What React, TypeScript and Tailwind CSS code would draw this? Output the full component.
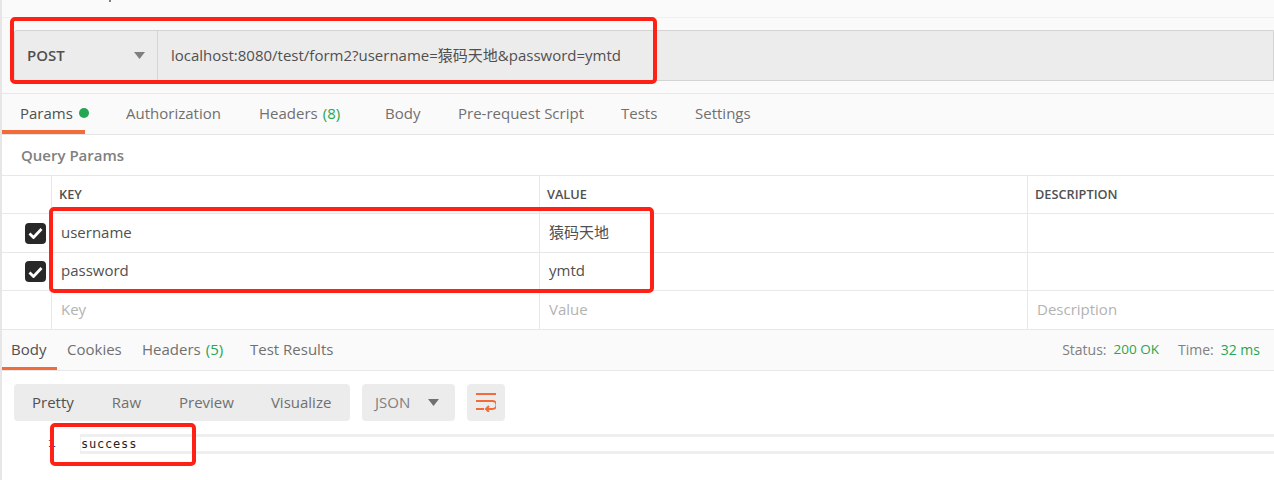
const font = "font-['Open_Sans','Noto_Sans_CJK_SC',sans-serif]";

const requestTabs = [
  { label: "Authorization", width: "w-[133px]" },
  { label: "Headers", count: "(8)", width: "w-[126px]" },
  { label: "Body", width: "w-[73px]" },
  { label: "Pre-request Script", width: "w-[163px]" },
  { label: "Tests", width: "w-[74px]" },
  { label: "Settings", width: "w-[80px]" },
];

function Caret({ className }: { className: string }) {
  return (
    <svg width="11" height="7" viewBox="0 0 11 7" className={className}>
      <path d="M0 0h11L5.5 7z" fill="currentColor" />
    </svg>
  );
}

function Check() {
  return (
    <div className="flex h-[21px] w-[21px] items-center justify-center rounded-[4px] bg-[#282828]">
      <svg width="15" height="12" viewBox="0 0 15 12" fill="none">
        <path d="M1.5 6.5l4 4L13.5 2" stroke="#fff" strokeWidth="2.8" />
      </svg>
    </div>
  );
}

function ParamRow({
  name,
  value,
  placeholder,
  checked,
  height,
}: {
  name: string;
  value: string;
  placeholder?: string;
  checked?: boolean;
  height: string;
}) {
  const tone = placeholder ? "text-[#b3b3b3]" : "text-[#505050]";
  return (
    <div className={`flex ${height} border-b border-[#e8e8e8] bg-white text-[15px] ${tone}`}>
      <div className="flex w-[49px] shrink-0 items-center justify-end pr-[5px]">
        {checked && <Check />}
      </div>
      <div className="flex w-[488px] shrink-0 items-center border-l border-[#e8e8e8] pb-[2px] pl-[9px]">{name}</div>
      <div className="flex w-[488px] shrink-0 items-center border-l border-[#e8e8e8] pb-[2px] pl-[9px]">{value}</div>
      <div className="flex flex-1 items-center border-l border-[#e8e8e8] pb-[2px] pl-[9px]">{placeholder}</div>
    </div>
  );
}

export default function App() {
  return (
    <div className={`relative h-[480px] w-[1274px] overflow-hidden border-l-2 border-[#e6e6e6] bg-[#fafafa] ${font}`}>
      {/* clipped tail of the tab title above the request bar */}
      <div className="h-[18px] border-b border-[#efefef]" />
      <div className="absolute left-[107px] top-0 h-[2px] w-[2px] bg-[#808080]" />

      {/* method + url */}
      <div className="h-[76px] border-b border-[#e8e8e8] pl-[12px] pt-[12px]">
        <div className="flex h-[51px] rounded-l-[3px] border border-[#d4d4d4] bg-[#ececec]">
          <div className="flex w-[143px] shrink-0 items-center justify-between border-r border-[#d4d4d4] pl-[12px] pr-[12px] text-[15px] font-semibold text-[#505050]">
            POST
            <Caret className="text-[#7f7f7f]" />
          </div>
          <div className="flex flex-1 items-center pl-[13px] text-[15px] text-[#505050]">
            localhost:8080/test/form2?username=猿码天地&amp;password=ymtd
          </div>
        </div>
      </div>

      {/* request tabs */}
      <div className="flex h-[41px] border-b border-[#e4e4e4] text-[15px] text-[#707070]">
        <div className="flex w-[83px] shrink-0 items-center gap-[6px] border-b-[4px] border-[#f26b3a] pl-[18px] pt-[2px] text-[#505050]">
          Params
          <span className="h-[10px] w-[10px] shrink-0 rounded-full bg-[#26a654]" />
        </div>
        <div className="flex pb-[2px] pl-[34px]">
          {requestTabs.map((tab) => (
            <div key={tab.label} className={`flex items-center pl-[7px] ${tab.width}`}>
              {tab.label}
              {tab.count && <span className="ml-[5px] text-[#26a654]">{tab.count}</span>}
            </div>
          ))}
        </div>
      </div>

      <div className="flex h-[41px] items-center border-b border-[#e8e8e8] bg-white pl-[19px] text-[15px] font-semibold text-[#808080]">
        Query Params
      </div>

      {/* params table */}
      <div className="flex h-[38px] border-b border-[#e8e8e8] bg-white text-[12.75px] font-semibold text-[#505050]">
        <div className="w-[49px] shrink-0" />
        <div className="flex w-[488px] shrink-0 items-center border-l border-[#e8e8e8] pl-[7px]">KEY</div>
        <div className="flex w-[488px] shrink-0 items-center border-l border-[#e8e8e8] pl-[7px]">VALUE</div>
        <div className="flex flex-1 items-center border-l border-[#e8e8e8] pl-[7px]">DESCRIPTION</div>
      </div>
      <ParamRow name="username" value="猿码天地" checked height="h-[39px]" />
      <ParamRow name="password" value="ymtd" checked height="h-[38px]" />
      <ParamRow name="Key" value="Value" placeholder="Description" height="h-[39px]" />

      {/* response tabs */}
      <div className="flex h-[41px] items-stretch justify-between border-b border-[#e8e8e8] text-[15px] text-[#707070]">
        <div className="flex">
          <div className="flex w-[55px] items-center border-b-[3px] border-[#f26b3a] pl-[9px] pt-[1px] text-[#505050]">Body</div>
          <div className="flex w-[75px] items-center pb-[2px] pl-[10px]">Cookies</div>
          <div className="flex w-[108px] items-center pb-[2px] pl-[10px]">
            Headers<span className="ml-[5px] text-[#26a654]">(5)</span>
          </div>
          <div className="flex items-center pb-[2px] pl-[10px]">Test Results</div>
        </div>
        <div className="flex items-center pb-[2px] pr-[14px] text-[14px] text-[#808080]">
          Status:<span className="ml-[7px] text-[13.5px] text-[#26a654]">200 OK</span>
          <span className="ml-[19px]">Time:</span>
          <span className="ml-[7px] text-[#26a654]">32 ms</span>
        </div>
      </div>

      {/* response body */}
      <div className="h-[110px] bg-white">
        <div className="flex gap-[12px] pl-[12px] pt-[13px] text-[15px]">
          <div className="flex h-[37px] w-[336px] items-center rounded-[4px] bg-[#ececec] text-[#707070]">
            <span className="ml-[18px] text-[#505050]">Pretty</span>
            <span className="ml-[38px]">Raw</span>
            <span className="ml-[38px]">Preview</span>
            <span className="ml-[37px]">Visualize</span>
          </div>
          <div className="flex h-[37px] w-[93px] items-center justify-between rounded-[4px] bg-[#ececec] pl-[13px] pr-[16px] text-[#808080]">
            JSON
            <Caret className="text-[#707070]" />
          </div>
          <div className="flex h-[37px] w-[38px] items-center justify-center rounded-[4px] bg-[#ececec]">
            <svg width="20" height="19" viewBox="0 0 20 19" fill="none" stroke="#f26b3a" strokeWidth="2">
              <path d="M0 1h20M0 8h16.5a3.5 3.5 0 0 1 0 8H10M13 13l-3 3 3 3M0 16h8" />
            </svg>
          </div>
        </div>
        <div className="relative ml-[78px] mt-[13px] flex h-[20px] border-y-[3px] border-l-[1px] border-[#efefef]">
          <span className="absolute left-[-33px] top-[-1px] font-['Liberation_Mono',monospace] text-[13px] leading-[15px] text-[#3b3fa0]">1</span>
          <span className="font-['DejaVu_Sans_Mono',monospace] text-[12px] leading-[15px] tracking-[0.8px] text-[#222]">success</span>
        </div>
      </div>

      {/* highlight boxes drawn on top of the request and response */}
      <div className="absolute left-[8px] top-[17px] h-[67px] w-[647px] rounded-[5px] border-[4px] border-[#ff2116]" />
      <div className="absolute left-[47px] top-[207px] h-[86px] w-[605px] rounded-[5px] border-[4px] border-[#ff2116]" />
      <div className="absolute left-[48px] top-[423px] h-[43px] w-[146px] rounded-[5px] border-[4px] border-[#ff2116]" />
    </div>
  );
}
